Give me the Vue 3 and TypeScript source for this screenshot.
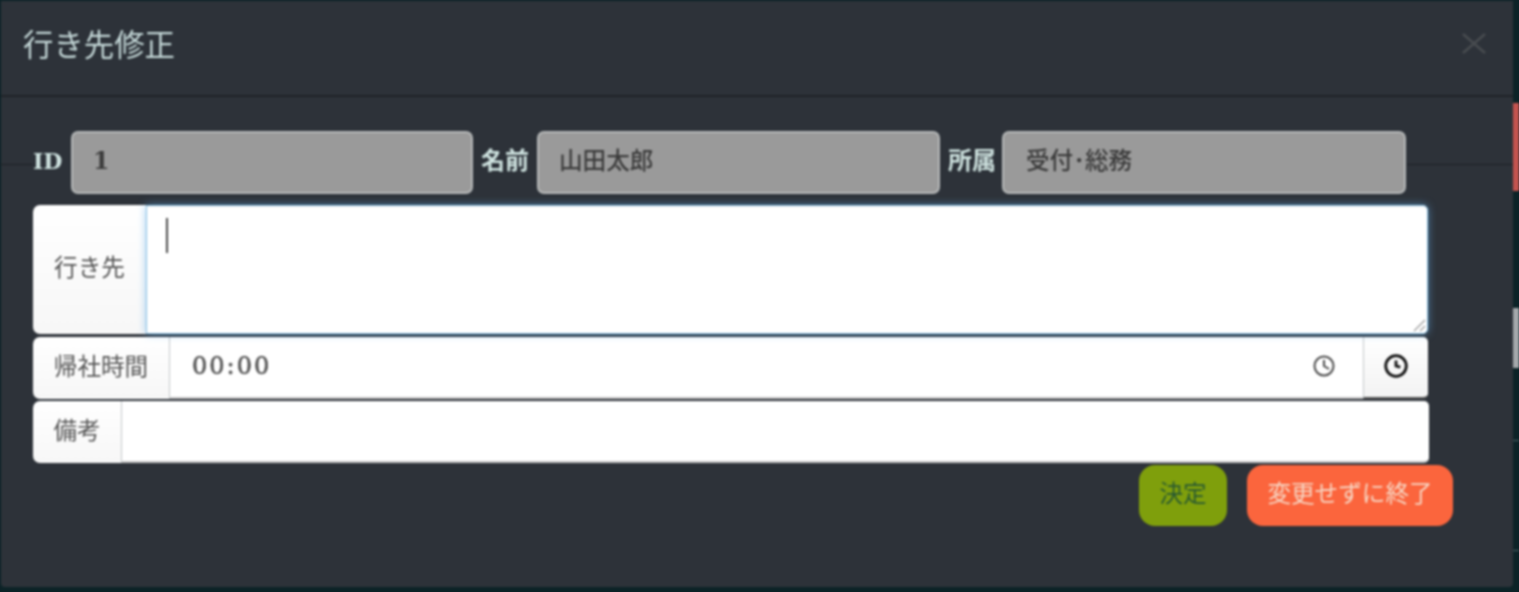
<template>
  <div class="backdrop">
    <span class="bg-line"></span>
    <div class="side">
      <span class="side-red"></span>
      <span class="side-gray"></span>
      <span class="side-tick tick-a"></span>
      <span class="side-tick tick-b"></span>
    </div>
    <div class="modal">
      <header class="modal-header">
        <h4 class="modal-title">行き先修正</h4>
        <svg class="close" width="24" height="21" viewBox="0 0 24 21">
          <path d="M1 1 L23 20 M23 1 L1 20" />
        </svg>
      </header>
      <div class="modal-body">
        <div class="info-row">
          <template v-for="f in infoFields" :key="f.label">
            <label class="info-label">{{ f.label }}</label>
            <input class="info-input" :class="f.cls" :value="f.value" disabled />
          </template>
        </div>
        <div class="group group-dest">
          <span class="addon addon-dest">行き先</span>
          <div class="dest-box">
            <span class="caret"></span>
            <svg class="grip" width="14" height="14" viewBox="0 0 14 14">
              <path d="M2 13 L13 2 M8 13 L13 8" />
            </svg>
          </div>
        </div>
        <div class="group group-time">
          <span class="addon addon-time">帰社時間</span>
          <div class="time-box">
            <input class="time-input" value="00:00" />
            <svg class="clock" width="24" height="24" viewBox="0 0 24 24">
              <circle cx="12" cy="12" r="9.5" />
              <path d="M12 6 V12 L17 15" />
            </svg>
          </div>
          <button class="clock-btn" type="button">
            <svg width="26" height="26" viewBox="0 0 24 24">
              <circle cx="12" cy="12" r="9.5" />
              <path d="M12 7 V12 L16 13" />
            </svg>
          </button>
        </div>
        <div class="group group-note">
          <span class="addon addon-note">備考</span>
          <input class="note-input" />
        </div>
        <div class="actions">
          <button class="btn btn-ok" type="button">決定</button>
          <button class="btn btn-cancel" type="button">変更せずに終了</button>
        </div>
      </div>
    </div>
  </div>
</template>

<script setup lang="ts">
const infoFields = [
  { label: 'ID', value: '1', cls: 'w-id' },
  { label: '名前', value: '山田太郎', cls: 'w-name' },
  { label: '所属', value: '受付･総務', cls: 'w-dept' },
];
</script>

<style>
html,
body {
  margin: 0;
  background: #0c2327;
  overflow: hidden;
}
</style>

<style scoped>
.backdrop {
  position: relative;
  width: 1519px;
  height: 592px;
  overflow: hidden;
  background: #0c2327;
  font-family: "DejaVu Serif", "Noto Sans CJK JP", serif;
  filter: blur(0.8px);
}

.modal {
  width: 1512px;
  height: 586px;
  margin: 1px 0 0 1px;
  position: relative;
  background: #2d3239;
  border-radius: 0 0 4px 4px;
}

.bg-line {
  position: absolute;
  left: 0;
  right: 6px;
  top: 164px;
  height: 1px;
  background: #1c2025;
  z-index: 1;
}

.side {
  position: absolute;
  left: 1513px;
  top: 0;
  width: 6px;
  height: 592px;
}

.side-red {
  position: absolute;
  top: 103px;
  left: 0;
  width: 6px;
  height: 88px;
  background: #c4534f;
}

.side-gray {
  position: absolute;
  top: 308px;
  left: 0;
  width: 6px;
  height: 60px;
  background: #a4a8ab;
}

.side-tick {
  position: absolute;
  left: 0;
  width: 6px;
  height: 1px;
  background: #4e6468;
}

.tick-a {
  top: 440px;
}

.tick-b {
  top: 550px;
}

.modal-header {
  height: 96px;
  box-sizing: border-box;
  border-bottom: 2px solid #1f2328;
  display: flex;
  align-items: flex-start;
  justify-content: space-between;
  padding: 24px 27px 0 22px;
}

.modal-title {
  margin: 0;
  font-family: "Noto Sans CJK JP", sans-serif;
  font-size: 30.4px;
  line-height: 36px;
  font-weight: 400;
  color: #c3d6d6;
}

.close {
  margin-top: 8px;
}

.close path {
  stroke: #484c50;
  stroke-width: 2.5;
  fill: none;
}

.modal-body {
  padding: 34px 0 0 32px;
  position: relative;
  z-index: 2;
}

.info-row {
  display: flex;
  align-items: center;
  height: 63px;
  width: 1374px;
  background: #2d3239;
}

.info-label {
  font-size: 24px;
  font-weight: 700;
  color: #cfe3e0;
  font-family: "DejaVu Serif", "Noto Sans CJK JP", serif;
  white-space: nowrap;
  margin: 0 8px;
  padding-bottom: 8px;
}

.info-label:first-child {
  font-size: 22px;
  width: 38px;
  margin: 0;
  padding-bottom: 4px;
}

.info-input {
  height: 63px;
  box-sizing: border-box;
  background: #9a9a9a;
  border: 2px solid #b4b7b7;
  border-radius: 7px;
  padding: 0 20px 7px;
  font-family: "DejaVu Serif", "Noto Sans CJK JP", serif;
  font-size: 23.6px;
  font-weight: 500;
  color: #3c3c3c;
  -webkit-text-fill-color: #3c3c3c;
  opacity: 1;
  outline: none;
}

.w-id {
  width: 402px;
  font-weight: 700;
  padding-bottom: 4px;
}

.w-name {
  width: 403px;
}

.w-dept {
  width: 404px;
  margin-left: -2px;
  padding-left: 22px;
}

.group {
  display: flex;
  width: 1396px;
}

.group-dest {
  height: 129px;
  margin-top: 11px;
  width: 1395px;
}

.group-time {
  height: 62px;
  margin-top: 3px;
  width: 1395px;
}

.group-note {
  height: 62px;
  margin-top: 2px;
}

.addon {
  box-sizing: border-box;
  background: linear-gradient(#fff, #f7f7f7);
  border-radius: 7px 0 0 7px;
  display: flex;
  align-items: center;
  justify-content: center;
  font-family: "Noto Sans CJK JP", sans-serif;
  font-size: 23.6px;
  color: #555;
  border-right: 1px solid #c4c8ca;
  padding-bottom: 7px;
  flex: none;
}

.addon-dest {
  width: 113px;
  border-right: 0;
}

.addon-time {
  width: 137px;
  white-space: nowrap;
}

.addon-note {
  width: 89px;
}

.dest-box {
  flex: 1;
  position: relative;
  z-index: 3;
  background: #fff;
  border-radius: 0 5px 5px 0;
  box-shadow: inset 0 1px 1px rgba(0, 0, 0, 0.075), 0 0 8px rgba(102, 175, 233, 0.6);
  border: 1px solid #8fc4e6;
}

.caret {
  position: absolute;
  left: 19px;
  top: 12px;
  width: 2px;
  height: 35px;
  background: #4a4a4a;
}

.grip {
  position: absolute;
  right: 1px;
  bottom: 1px;
}

.grip path {
  stroke: #9a9a9a;
  stroke-width: 1.2;
  fill: none;
}

.time-box {
  flex: 1;
  position: relative;
  display: flex;
  align-items: center;
  padding-bottom: 2px;
  background: #fff;
  border-bottom: 2px solid #c4c4c4;
  box-sizing: border-box;
}

.time-input {
  flex: 1;
  min-width: 0;
  border: 0;
  outline: none;
  background: transparent;
  padding: 0 0 0 22px;
  font-family: "DejaVu Serif", serif;
  font-size: 24px;
  color: #555;
  letter-spacing: 2px;
  -webkit-text-stroke: 0.6px #555;
}

.clock {
  margin-right: 27px;
  flex: none;
}

.clock circle,
.clock path {
  stroke: #4a4a4a;
  stroke-width: 2;
  fill: none;
}

.clock-btn {
  width: 65px;
  flex: none;
  padding: 0 0 2px;
  border: 0;
  border-left: 1px solid #c4c8ca;
  border-bottom: 2px solid #555;
  border-radius: 0 5px 5px 0;
  background: linear-gradient(#fff, #f3f3f3);
  display: flex;
  align-items: center;
  justify-content: center;
}

.clock-btn circle,
.clock-btn path {
  stroke: #111;
  stroke-width: 2.6;
  fill: none;
}

.note-input {
  flex: 1;
  min-width: 0;
  border: 0;
  border-bottom: 2px solid #c4c4c4;
  border-radius: 0 5px 5px 0;
  outline: none;
  background: #fff;
}

.actions {
  display: flex;
  justify-content: flex-end;
  align-items: center;
  gap: 20px;
  width: 1420px;
  margin-top: 2px;
}

.btn {
  height: 61px;
  border: 0;
  border-radius: 16px;
  padding: 0 0 7px;
  font-family: "Noto Sans CJK JP", sans-serif;
  font-size: 23.6px;
  white-space: nowrap;
}

.btn-ok {
  width: 88px;
  background: #7f9f0c;
  color: #2a5a30;
}

.btn-cancel {
  width: 206px;
  background: #fb653d;
  color: #f7d5c2;
}
</style>
